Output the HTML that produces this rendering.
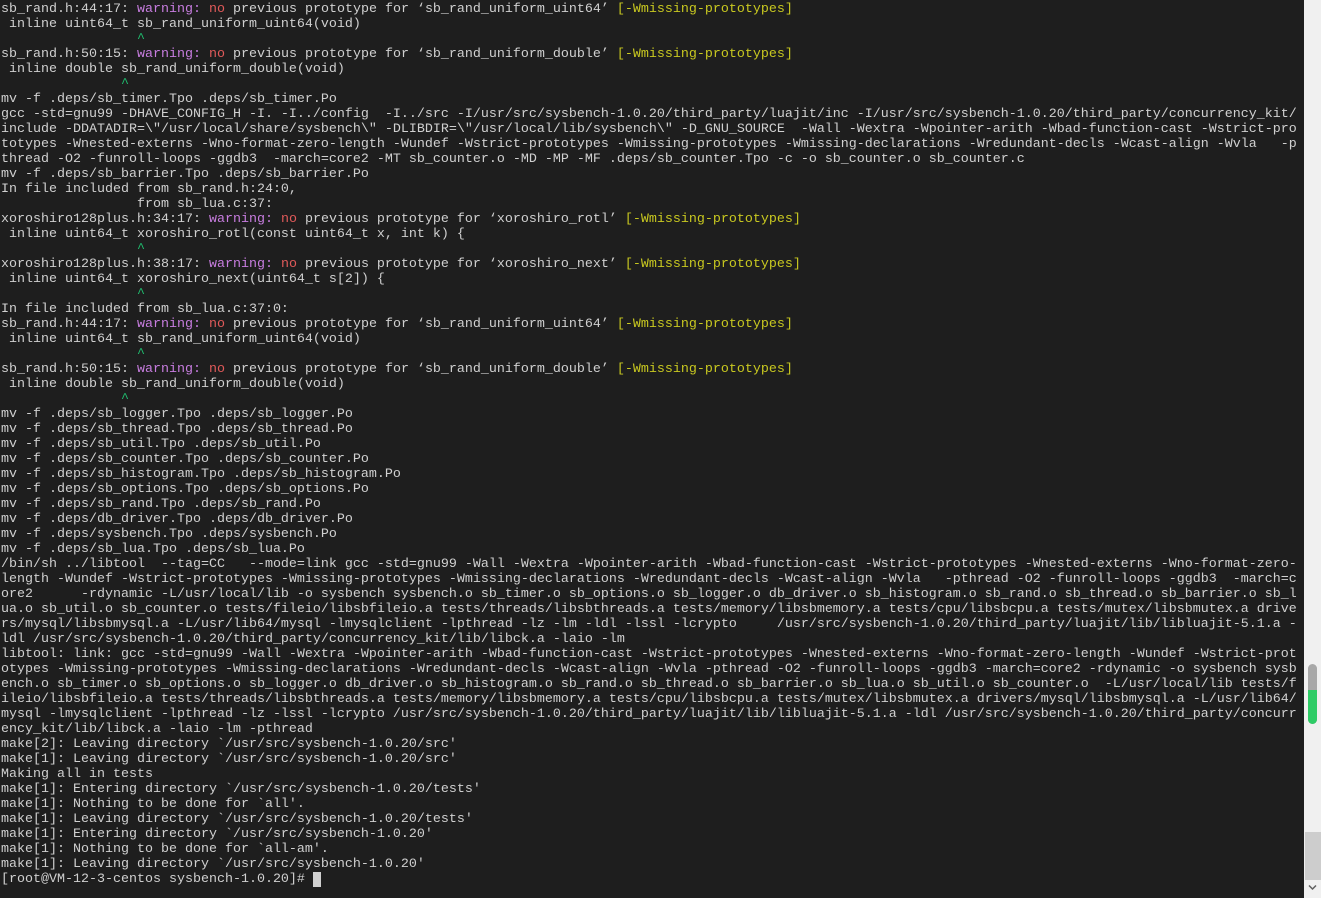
<!DOCTYPE html><html><head><meta charset="utf-8"><style>
html,body{margin:0;padding:0;background:#1e1e1e;width:1321px;height:898px;overflow:hidden}
pre{margin:0;position:absolute;left:1px;top:2px;font-family:"Liberation Mono",monospace;font-size:13.33px;line-height:15px;color:#d0d0d0;white-space:pre}
.w{color:#c87de0}.n{color:#e05a5a}.y{color:#c8c820}.g{color:#20c070}
#sb{position:absolute;left:1304px;top:0;width:17px;height:898px;background:#f0f0f0}
.cur{background:#d0d0d0}
</style></head><body><pre>sb_rand.h:44:17: <span class="w">warning:</span> <span class="n">no</span> previous prototype for ‘sb_rand_uniform_uint64’ <span class="y">[-Wmissing-prototypes]</span>
 inline uint64_t sb_rand_uniform_uint64(void)
                 <span class="g">^</span>
sb_rand.h:50:15: <span class="w">warning:</span> <span class="n">no</span> previous prototype for ‘sb_rand_uniform_double’ <span class="y">[-Wmissing-prototypes]</span>
 inline double sb_rand_uniform_double(void)
               <span class="g">^</span>
mv -f .deps/sb_timer.Tpo .deps/sb_timer.Po
gcc -std=gnu99 -DHAVE_CONFIG_H -I. -I../config  -I../src -I/usr/src/sysbench-1.0.20/third_party/luajit/inc -I/usr/src/sysbench-1.0.20/third_party/concurrency_kit/
include -DDATADIR=\"/usr/local/share/sysbench\" -DLIBDIR=\"/usr/local/lib/sysbench\" -D_GNU_SOURCE  -Wall -Wextra -Wpointer-arith -Wbad-function-cast -Wstrict-pro
totypes -Wnested-externs -Wno-format-zero-length -Wundef -Wstrict-prototypes -Wmissing-prototypes -Wmissing-declarations -Wredundant-decls -Wcast-align -Wvla   -p
thread -O2 -funroll-loops -ggdb3  -march=core2 -MT sb_counter.o -MD -MP -MF .deps/sb_counter.Tpo -c -o sb_counter.o sb_counter.c
mv -f .deps/sb_barrier.Tpo .deps/sb_barrier.Po
In file included from sb_rand.h:24:0,
                 from sb_lua.c:37:
xoroshiro128plus.h:34:17: <span class="w">warning:</span> <span class="n">no</span> previous prototype for ‘xoroshiro_rotl’ <span class="y">[-Wmissing-prototypes]</span>
 inline uint64_t xoroshiro_rotl(const uint64_t x, int k) {
                 <span class="g">^</span>
xoroshiro128plus.h:38:17: <span class="w">warning:</span> <span class="n">no</span> previous prototype for ‘xoroshiro_next’ <span class="y">[-Wmissing-prototypes]</span>
 inline uint64_t xoroshiro_next(uint64_t s[2]) {
                 <span class="g">^</span>
In file included from sb_lua.c:37:0:
sb_rand.h:44:17: <span class="w">warning:</span> <span class="n">no</span> previous prototype for ‘sb_rand_uniform_uint64’ <span class="y">[-Wmissing-prototypes]</span>
 inline uint64_t sb_rand_uniform_uint64(void)
                 <span class="g">^</span>
sb_rand.h:50:15: <span class="w">warning:</span> <span class="n">no</span> previous prototype for ‘sb_rand_uniform_double’ <span class="y">[-Wmissing-prototypes]</span>
 inline double sb_rand_uniform_double(void)
               <span class="g">^</span>
mv -f .deps/sb_logger.Tpo .deps/sb_logger.Po
mv -f .deps/sb_thread.Tpo .deps/sb_thread.Po
mv -f .deps/sb_util.Tpo .deps/sb_util.Po
mv -f .deps/sb_counter.Tpo .deps/sb_counter.Po
mv -f .deps/sb_histogram.Tpo .deps/sb_histogram.Po
mv -f .deps/sb_options.Tpo .deps/sb_options.Po
mv -f .deps/sb_rand.Tpo .deps/sb_rand.Po
mv -f .deps/db_driver.Tpo .deps/db_driver.Po
mv -f .deps/sysbench.Tpo .deps/sysbench.Po
mv -f .deps/sb_lua.Tpo .deps/sb_lua.Po
/bin/sh ../libtool  --tag=CC   --mode=link gcc -std=gnu99 -Wall -Wextra -Wpointer-arith -Wbad-function-cast -Wstrict-prototypes -Wnested-externs -Wno-format-zero-
length -Wundef -Wstrict-prototypes -Wmissing-prototypes -Wmissing-declarations -Wredundant-decls -Wcast-align -Wvla   -pthread -O2 -funroll-loops -ggdb3  -march=c
ore2      -rdynamic -L/usr/local/lib -o sysbench sysbench.o sb_timer.o sb_options.o sb_logger.o db_driver.o sb_histogram.o sb_rand.o sb_thread.o sb_barrier.o sb_l
ua.o sb_util.o sb_counter.o tests/fileio/libsbfileio.a tests/threads/libsbthreads.a tests/memory/libsbmemory.a tests/cpu/libsbcpu.a tests/mutex/libsbmutex.a drive
rs/mysql/libsbmysql.a -L/usr/lib64/mysql -lmysqlclient -lpthread -lz -lm -ldl -lssl -lcrypto     /usr/src/sysbench-1.0.20/third_party/luajit/lib/libluajit-5.1.a -
ldl /usr/src/sysbench-1.0.20/third_party/concurrency_kit/lib/libck.a -laio -lm
libtool: link: gcc -std=gnu99 -Wall -Wextra -Wpointer-arith -Wbad-function-cast -Wstrict-prototypes -Wnested-externs -Wno-format-zero-length -Wundef -Wstrict-prot
otypes -Wmissing-prototypes -Wmissing-declarations -Wredundant-decls -Wcast-align -Wvla -pthread -O2 -funroll-loops -ggdb3 -march=core2 -rdynamic -o sysbench sysb
ench.o sb_timer.o sb_options.o sb_logger.o db_driver.o sb_histogram.o sb_rand.o sb_thread.o sb_barrier.o sb_lua.o sb_util.o sb_counter.o  -L/usr/local/lib tests/f
ileio/libsbfileio.a tests/threads/libsbthreads.a tests/memory/libsbmemory.a tests/cpu/libsbcpu.a tests/mutex/libsbmutex.a drivers/mysql/libsbmysql.a -L/usr/lib64/
mysql -lmysqlclient -lpthread -lz -lssl -lcrypto /usr/src/sysbench-1.0.20/third_party/luajit/lib/libluajit-5.1.a -ldl /usr/src/sysbench-1.0.20/third_party/concurr
ency_kit/lib/libck.a -laio -lm -pthread
make[2]: Leaving directory `/usr/src/sysbench-1.0.20/src'
make[1]: Leaving directory `/usr/src/sysbench-1.0.20/src'
Making all in tests
make[1]: Entering directory `/usr/src/sysbench-1.0.20/tests'
make[1]: Nothing to be done for `all'.
make[1]: Leaving directory `/usr/src/sysbench-1.0.20/tests'
make[1]: Entering directory `/usr/src/sysbench-1.0.20'
make[1]: Nothing to be done for `all-am'.
make[1]: Leaving directory `/usr/src/sysbench-1.0.20'
[root@VM-12-3-centos sysbench-1.0.20]# <span class="cur"> </span></pre>
<div id="sb">
<div style="position:absolute;left:4px;top:664px;width:9px;height:60px;border-radius:5px;background:#a8a8a8"></div>
<div style="position:absolute;left:4px;top:690px;width:9px;height:34px;border-radius:0 0 5px 5px;background:#2ecc66"></div>
<div style="position:absolute;left:1px;top:832px;width:16px;height:48px;background:#cdcdcd"></div>
<svg style="position:absolute;left:4px;top:884px" width="9" height="7" viewBox="0 0 9 7"><path d="M1 1.5 L4.5 5 L8 1.5" stroke="#606060" stroke-width="1.5" fill="none"/></svg>
</div>
</body></html>
